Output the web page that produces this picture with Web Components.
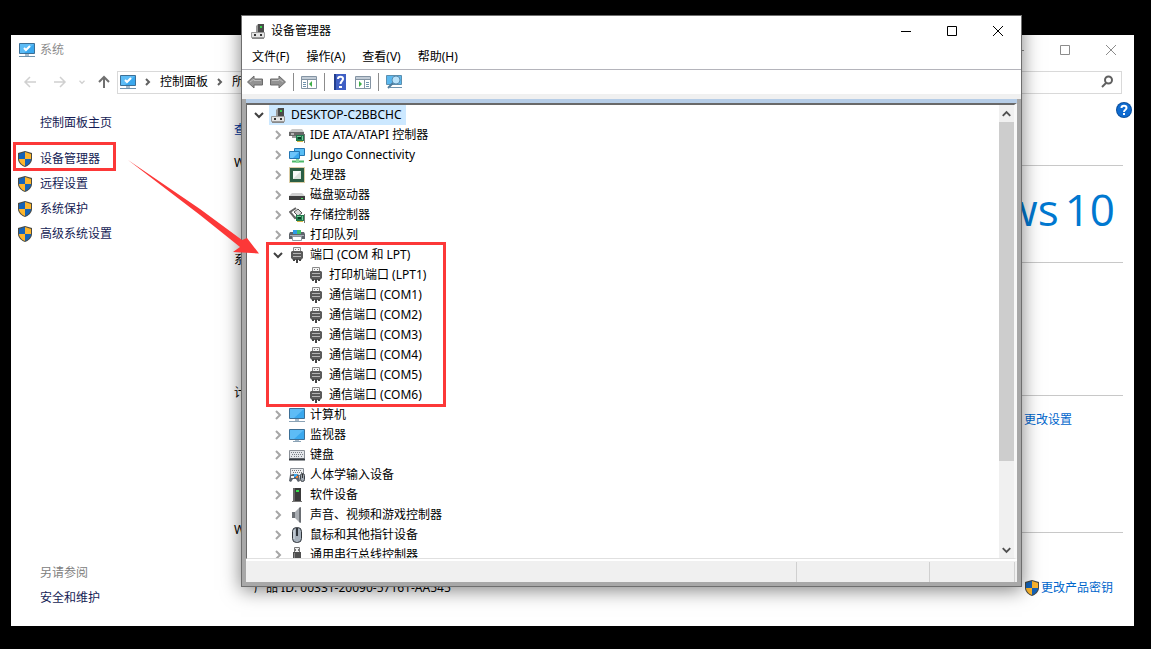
<!DOCTYPE html>
<html lang="zh-CN">
<head>
<meta charset="utf-8">
<title>设备管理器</title>
<style>
    html, body {
        height: 100%;
        margin: 0;
    }
    body {
        background: #000;
        font: 12px/20px "Noto Sans", "Noto Sans CJK SC", sans-serif;
        color: #000;
    }
</style>
</head>
<body>
<desktop-screen>
    <system-window slot="back"></system-window>
    <device-window slot="front">
        <tree-item level="0" icon="computer" open selected>DESKTOP-C2BBCHC</tree-item>
        <tree-item icon="ide">IDE ATA/ATAPI 控制器</tree-item>
        <tree-item icon="network">Jungo Connectivity</tree-item>
        <tree-item icon="cpu">处理器</tree-item>
        <tree-item icon="disk">磁盘驱动器</tree-item>
        <tree-item icon="storage">存储控制器</tree-item>
        <tree-item icon="printer">打印队列</tree-item>
        <tree-item icon="port" open>端口 (COM 和 LPT)</tree-item>
        <tree-item level="2" icon="port">打印机端口 (LPT1)</tree-item>
        <tree-item level="2" icon="port">通信端口 (COM1)</tree-item>
        <tree-item level="2" icon="port">通信端口 (COM2)</tree-item>
        <tree-item level="2" icon="port">通信端口 (COM3)</tree-item>
        <tree-item level="2" icon="port">通信端口 (COM4)</tree-item>
        <tree-item level="2" icon="port">通信端口 (COM5)</tree-item>
        <tree-item level="2" icon="port">通信端口 (COM6)</tree-item>
        <tree-item icon="pc">计算机</tree-item>
        <tree-item icon="monitor">监视器</tree-item>
        <tree-item icon="keyboard">键盘</tree-item>
        <tree-item icon="hid">人体学输入设备</tree-item>
        <tree-item icon="software">软件设备</tree-item>
        <tree-item icon="sound">声音、视频和游戏控制器</tree-item>
        <tree-item icon="mouse">鼠标和其他指针设备</tree-item>
        <tree-item icon="usb">通用串行总线控制器</tree-item>
    </device-window>
    <callout-marks slot="marks"></callout-marks>
</desktop-screen>

<script>
const card = `
    <path d="M7 8h8v6H7z" fill="#1f7a4b"/><path d="M9 10h3v2H9z" fill="#0b3b26"/>
    <path d="M13.500 9v4M8 9.500h4" stroke="#79c79a"/><path d="M8 14.500h6" stroke="#d9b64a"/><path d="M15.500 7v9" stroke="#777"/>`;
const screen = `
    <path d="M.5 1.500h15v10H.5z" fill="#3aa8ee" stroke="#3c6f96"/>
    <path d="M1 2h14L5 11H1z" fill="#6cc4fa" opacity=".7"/>`;

// all icons are drawn on a 16x16 grid
const icons = {
    computer: `
        <path d="M8 1h6v9H8z" fill="#4a4a4a"/><path d="M6 3l2-2v8H6z" fill="#9a9a9a"/><path d="M10 3h2v2h-2z" fill="#35d04a"/>
        <path d="M1.500 9.500h13v5h-13z" fill="#e4e4e4" stroke="#9a9a9a"/><path d="M4 11h2v2H4zM10 11h2v2h-2z" fill="#333"/>
        <path d="M2 15.500h12" stroke="#888"/>`,
    ide: `
        <path d="M3 2h10l2 3H0z" fill="#c8c8c8"/><path d="M0 5h15v4H0z" fill="#666"/><path d="M2 7h3" stroke="#fff"/>
        <path d="M3 9h5v2H3z" fill="#999"/>${card}`,
    network: `
        <path d="M5.500 1.500h10v7h-10z" fill="#58bdf5" stroke="#2476b3"/>
        <path d="M.5 4.500h10v7H.5z" fill="#3aa8ee" stroke="#2476b3"/><path d="M1 5h9l-6 6H1z" fill="#6cc4fa"/>
        <path d="M3 14.500h12" stroke="#4db86a" stroke-width="2"/><path d="M7 12h3v4H7z" fill="#86d89b"/>`,
    cpu: `
        <path d="M.5.500h15v15H.5z" fill="none" stroke="#b79a4b" stroke-dasharray="1 1"/>
        <path d="M1 1h14v14H1z" fill="#2b5e44"/><path d="M4 4h8v8H4z" fill="#dbe2de"/><path d="M4 4h8l-8 8z" fill="#f7f9f8"/>`,
    disk: `
        <path d="M3 6h10l3 3H0z" fill="#d0d0d0"/><path d="M0 9h16v4H0z" fill="#3e3e3e"/><path d="M12 11.500h2" stroke="#4be05e"/>`,
    storage: `
        <path d="M7 1L1 5l5 6 3-1" fill="none" stroke="#666" stroke-width="2"/><path d="M5 5l4-3 4 4-4 3z" fill="#d9d9d9" stroke="#555"/>
        ${card}`,
    printer: `
        <path d="M4 3h8v4H4z" fill="#2e9be6"/><path d="M8 3h4v4H8z" fill="#3fc06c"/>
        <path d="M1 5h3v2h8V5h3l1 2v5H0V7z" fill="#5f646b"/><path d="M1 8h14v1H1z" fill="#a9b0b8"/>
        <path d="M3.500 9.500h9v4h-9z" fill="#fff" stroke="#8f969e"/>`,
    port: `
        <path d="M4.500.5h7v4h-7z" fill="#f4f4f4" stroke="#8a8a8a"/><path d="M6 2h1v1H6zM9 2h1v1H9z" fill="#777"/>
        <path d="M3 4h10l1 1v6l-2 2H4l-2-2V5z" fill="#5a5a5a"/><path d="M4 6.500h8M4 9.500h8" stroke="#b5b5b5"/>
        <path d="M4 12h2v2H4zM7 12h2v4H7zM10 12h2v2h-2z" fill="#444"/>`,
    pc: `${screen}<path d="M6 12h4v2H6z" fill="#a9bccb"/><path d="M0 14.500h16" stroke="#8aa2b5"/>`,
    monitor: `<g transform="translate(0 1)">${screen}</g><path d="M6 13h4v1H6z" fill="#a9bccb"/><path d="M4 14.500h8" stroke="#8aa2b5"/>`,
    keyboard: `
        <path d="M.5 3.500h15v8H.5z" fill="#e3e6ea" stroke="#8b9097"/>
        <path d="M2 5.500h12M3 7.500h12M2 9.500h2M5 9.500h6M12 9.500h2" stroke="#777d85" stroke-dasharray="1 1"/>
        <path d="M0 12.500h16" stroke="#33383e" stroke-width="2"/>`,
    hid: `
        <path d="M1.500 1.500h13v7h-13z" fill="#eceef0" stroke="#8b9097"/><path d="M3 3.500h10M4 5.500h9" stroke="#777" stroke-dasharray="1 1"/>
        <path d="M0 14l1-6 3-1h4l2 1 1 6-2 1-2-3H4l-2 3z" fill="#5b626a"/><path d="M2 9h3v2H2z" fill="#f3f3f3"/>
        <path d="M5 7h3v3H5z" fill="#3aa8ee"/><path d="M7 9h2v2H7z" fill="#e87d37"/>
        <rect x="11.500" y="6.500" width="4" height="8" rx="2" fill="#9fa7b0" stroke="#3e444b"/><path d="M13.500 7v4" stroke="#333"/>`,
    software: `
        <path d="M4 1h8v13H4z" fill="#3a3a3a"/><path d="M4 1h2v13H4z" fill="#666"/><path d="M7 3h3v2H7z" fill="#35e04a"/><path d="M3 14.500h10" stroke="#777"/>`,
    sound: `
        <path d="M3 5h3v6H3z" fill="#6a6e73"/><path d="M6 5l5-5v16l-5-5z" fill="#a9adb2"/><path d="M10 1l2-1v16l-2-1z" fill="#6a6e73"/>`,
    mouse: `
        <rect x="3.500" y=".5" width="9" height="15" rx="4" fill="#a6b0bb" stroke="#30353b" stroke-width="1"/>
        <path d="M5 3v9" stroke="#dbe1e7"/><path d="M8 1v8" stroke="#30353b" stroke-width="2"/>`,
    usb: `
        <path d="M5.500.5h5v5h-5z" fill="#f0f0f0" stroke="#777"/><path d="M6 2h1v2H6zM9 2h1v2H9z" fill="#777"/>
        <path d="M4 5h8v9l-2 2H6l-2-2z" fill="#505050"/><path d="M5 6h1v8H5z" fill="#888"/>`,
    shield: `
        <path d="M8 0l7 2v6c0 4-4 7-7 8-3-1-7-4-7-8V2z" fill="#4a4a42"/>
        <path d="M8 1v7H2V3z" fill="#1463b8"/><path d="M8 1v7h6V3z" fill="#fdb52c"/>
        <path d="M8 8H2c0 3 3 6 6 7z" fill="#fdb52c"/><path d="M8 8h6c0 3-3 6-6 7z" fill="#1463b8"/>`,
    system: `${screen}<path d="M5 6l2 2 4-4" fill="none" stroke="#fff" stroke-width="2"/>
        <path d="M6 12h4v2H6z" fill="#a9bccb"/><path d="M0 14.500h16" stroke="#6f93ad"/>`,
    back: `<path d="M.5 8L7 2v3h8.500v6H7v3z" fill="#929292" stroke="#6b6b6b"/><path d="M3 8l4-3v1.500h7" fill="none" stroke="#bdbdbd"/>`,
    forward: `<path d="M15.500 8L9 2v3H.5v6H9v3z" fill="#929292" stroke="#6b6b6b"/><path d="M2 6.500h7V5l4 3" fill="none" stroke="#bdbdbd"/>`,
    pane: `
        <path d="M.5 2.500h15v12H.5z" fill="#fff" stroke="#8494a3"/><path d="M1 3h14v2H1z" fill="#c2ccd6"/><path d="M1 5.500h14M6.500 6v8" stroke="#8494a3"/>
        <path d="M2 8.500h3M2 10.500h3M2 12.500h3" stroke="#6f93ad"/><path d="M11 7v6L8 10z" fill="#3fae49"/>`,
    action: `
        <path d="M.5 2.500h15v12H.5z" fill="#fff" stroke="#8494a3"/><path d="M1 3h14v2H1z" fill="#c2ccd6"/><path d="M1 5.500h14M9.500 6v8" stroke="#8494a3"/>
        <path d="M11 8.500h3M11 10.500h3M11 12.500h3" stroke="#6f93ad"/><path d="M4 7v6l3-3z" fill="#3fae49"/>`,
    help: `
        <path d="M2 0h12v16H2z" fill="#3f5fc4"/><path d="M2 0h2v16H2z" fill="#24408f"/>
        <path d="M6 5c0-3 5-3 5 0 0 2-2.500 2-2.500 5" fill="none" stroke="#fff" stroke-width="2"/><path d="M7 12h3v2H7z" fill="#fff"/>`,
    scan: `
        <path d="M.5 1.500h15v9H.5z" fill="#5bb8ef" stroke="#5c8fae"/><path d="M4 13.500h12" stroke="#6f93ad"/>
        <circle cx="10" cy="6" r="4" fill="#b8e2fa" stroke="#5a8db0" stroke-width="1"/><path d="M7 9l-5 5" stroke="#4f7c9c" stroke-width="2"/>`,
    info: `
        <circle cx="8" cy="8" r="8" fill="#0a4f9e"/><circle cx="8" cy="8" r="7" fill="#0f6bd0"/>
        <path d="M5.500 6c0-3 5-3 5 0 0 2-2.500 1.500-2.500 4" fill="none" stroke="#fff" stroke-width="2"/><path d="M7 11h2v2H7z" fill="#fff"/>`,
    right: `<path d="M6 4l4 4-4 4" fill="none" stroke="currentColor" stroke-width="2"/>`,
    small: `<path d="M6 5l3 3-3 3" fill="none" stroke="currentColor" stroke-width="2"/>`,
    down: `<path d="M4 6l4 4 4-4" fill="none" stroke="currentColor" stroke-width="2"/>`,
    up: `<path d="M4 10l4-4 4 4" fill="none" stroke="currentColor" stroke-width="2"/>`,
    arrowLeft: `<path d="M14 8H3M8 3L3 8l5 5" fill="none" stroke="currentColor" stroke-width="1.500"/>`,
    arrowRight: `<path d="M2 8h11M8 3l5 5-5 5" fill="none" stroke="currentColor" stroke-width="1.500"/>`,
    arrowUp: `<path d="M8 14V3M3 8l5-5 5 5" fill="none" stroke="currentColor" stroke-width="2"/>`,
    search: `<circle cx="9.500" cy="6" r="3.500" fill="none" stroke="currentColor" stroke-width="2"/><path d="M7 9l-4 4" stroke="currentColor" stroke-width="2"/>`,
    minimize: `<path d="M3 8.500h10" stroke="currentColor"/>`,
    maximize: `<path d="M3.500 3.500h9v9h-9z" fill="none" stroke="currentColor"/>`,
    close: `<path d="M3 3l10 10M13 3L3 13" stroke="currentColor"/>`
};

// Base class: clones a template into an open shadow root
class BaseElement extends HTMLElement {
    constructor() {
        super();
        this.attachShadow({ mode: 'open' });
        const template = document.createElement('template');
        template.innerHTML = this.render();
        this.shadowRoot.appendChild(template.content.cloneNode(true));
    }
}

class WinIcon extends HTMLElement {
    constructor() {
        super();
        this.attachShadow({ mode: 'open' });
    }

    static get observedAttributes() {
        return ['name'];
    }

    attributeChangedCallback(name, oldValue, newValue) {
        this.shadowRoot.innerHTML = `
            <style>
                :host { display: block; flex: none; width: 16px; height: 16px; }
                svg { display: block; width: 100%; height: 100%; }
            </style>
            <svg viewBox="0 0 16 16" aria-hidden="true">${icons[newValue] || ''}</svg>
        `;
    }
}

class CaptionButtons extends BaseElement {
    render() {
        return `
            <style>
                :host { display: flex; margin-left: auto; }
                button {
                    width: 46px;
                    height: 28px;
                    padding: 0;
                    border: none;
                    background: none;
                    color: inherit;
                    display: flex;
                    align-items: center;
                    justify-content: center;
                }
                button:hover { background: #e5e5e5; }
            </style>
            <button aria-label="最小化"><win-icon name="minimize"></win-icon></button>
            <button aria-label="最大化"><win-icon name="maximize"></win-icon></button>
            <button aria-label="关闭"><win-icon name="close"></win-icon></button>
        `;
    }
}

class TreeItem extends BaseElement {
    render() {
        return `
            <style>
                :host {
                    display: flex;
                    height: 20px;
                    padding-left: 19px;
                    white-space: nowrap;
                }
                :host([level="0"]) { padding-left: 0; }
                :host([level="2"]) { padding-left: 38px; }
                button {
                    width: 20px;
                    padding: 0 2px;
                    border: none;
                    background: none;
                    color: #a6a6a6;
                }
                :host([open]) button { color: #404040; }
                :host([level="2"]) button { visibility: hidden; }
                .label {
                    display: flex;
                    align-items: center;
                    gap: 5px;
                    padding: 0 4px 0 1px;
                }
                :host([selected]) .label { background: #cce8ff; }
            </style>
            <button aria-label="展开"><win-icon class="chevron"></win-icon></button>
            <span class="label"><win-icon class="icon"></win-icon><slot></slot></span>
        `;
    }

    connectedCallback() {
        this.setAttribute('role', 'treeitem');
        this.shadowRoot.querySelector('.chevron').setAttribute('name', this.hasAttribute('open') ? 'down' : 'right');
        this.shadowRoot.querySelector('.icon').setAttribute('name', this.getAttribute('icon'));
    }
}

class DeviceWindow extends BaseElement {
    render() {
        return `
            <style>
                :host {
                    display: flex;
                    flex-direction: column;
                    box-sizing: border-box;
                    border: 1px solid #6e6e6e;
                    background: #fff;
                    box-shadow: 0 3px 18px rgba(0,0,0,0.5);
                }
                header, nav, .toolbar { display: flex; align-items: center; }
                header { height: 29px; gap: 5px; padding-left: 8px; }
                nav { height: 24px; gap: 1px; padding: 0 2px; }
                nav button {
                    padding: 0 8px;
                    border: none;
                    background: none;
                    font: inherit;
                    color: inherit;
                }
                .toolbar {
                    height: 24px;
                    padding-left: 5px;
                    gap: 7px;
                    border-top: 1px solid #b4b4bb;
                    border-bottom: 5px solid #f0f0f0;
                }
                .toolbar button { padding: 0; border: none; background: none; }
                .toolbar hr { width: 1px; height: 18px; margin: 0; border: none; background: #8c8c8c; }
                .frame {
                    flex: 1;
                    min-height: 0;
                    display: flex;
                    flex-direction: column;
                    border: 4px solid #a8a8a8;
                    border-top: none;
                    background: #f0f0f0;
                }
                .strip { height: 4px; background: #b6cde7; }
                .view {
                    flex: 1;
                    min-height: 0;
                    display: flex;
                    border: 1px solid #696969;
                    border-width: 2px 0 0 1px;
                    border-right: 3px solid #f8f8f8;
                    border-bottom: 1px solid #e0e0e0;
                    background: #fff;
                }
                .tree { flex: 1; min-width: 0; overflow: hidden; padding-left: 2px; }
                .scrollbar {
                    width: 15px;
                    display: flex;
                    flex-direction: column;
                    background: #f0f0f0;
                    color: #505050;
                }
                .scrollbar button {
                    height: 17px;
                    padding: 0;
                    border: none;
                    background: none;
                    color: inherit;
                }
                .scrollbar win-icon { width: 15px; }
                .track { flex: 1; }
                .thumb { height: 81%; background: #cdcdcd; }
                footer {
                    display: flex;
                    height: 20px;
                    padding: 1px 2px 0 0;
                    border-top: 2px solid #fff;
                }
                footer span { border-right: 1px solid #d0d0d0; width: 132px; }
                footer span:first-child { flex: 1; }
                footer span:last-child { width: 84px; }
            </style>
            <header>
                <win-icon name="computer"></win-icon>
                <span>设备管理器</span>
                <caption-buttons></caption-buttons>
            </header>
            <nav>
                <button>文件(F)</button>
                <button>操作(A)</button>
                <button>查看(V)</button>
                <button>帮助(H)</button>
            </nav>
            <div class="toolbar">
                <button aria-label="后退"><win-icon name="back"></win-icon></button>
                <button aria-label="前进"><win-icon name="forward"></win-icon></button>
                <hr>
                <button aria-label="显示控制台树"><win-icon name="pane"></win-icon></button>
                <hr>
                <button aria-label="帮助"><win-icon name="help"></win-icon></button>
                <button aria-label="操作窗格"><win-icon name="action"></win-icon></button>
                <hr>
                <button aria-label="扫描检测硬件改动"><win-icon name="scan"></win-icon></button>
            </div>
            <div class="frame">
                <div class="strip"></div>
                <div class="view">
                    <div class="tree" role="tree"><slot></slot></div>
                    <div class="scrollbar">
                        <button aria-label="向上滚动"><win-icon name="up"></win-icon></button>
                        <div class="track"><div class="thumb"></div></div>
                        <button aria-label="向下滚动"><win-icon name="down"></win-icon></button>
                    </div>
                </div>
                <footer><span></span><span></span><span></span></footer>
            </div>
        `;
    }
}

class SystemWindow extends BaseElement {
    render() {
        return `
            <style>
                :host {
                    display: flex;
                    flex-direction: column;
                    background: #fff;
                }
                header { display: flex; align-items: center; height: 29px; gap: 5px; padding-left: 8px; color: #8c8c8c; }
                .nav, .history { display: flex; align-items: center; color: #d0d0d0; }
                .nav {
                    gap: 9px;
                    height: 24px;
                    margin-top: 6px;
                    padding: 0 12px 0 11px;
                }
                .history { gap: 14px; }
                .nav button { padding: 0; border: none; background: none; color: inherit; }
                .nav .recent win-icon { width: 10px; height: 10px; }
                .nav .up { color: #707070; }
                .address {
                    flex: 1;
                    display: flex;
                    align-items: center;
                    gap: 4px;
                    box-sizing: border-box;
                    height: 23px;
                    margin-left: -4px;
                    padding: 0 6px 0 2px;
                    border: 1px solid #d9d9d9;
                    color: #606060;
                }
                .address a { color: #000; text-decoration: none; }
                .address .search { margin-left: auto; }
                .body { flex: 1; display: flex; }
                aside {
                    width: 217px;
                    display: flex;
                    flex-direction: column;
                    gap: 5px;
                    padding: 19px 0 18px 6px;
                }
                aside a {
                    display: flex;
                    align-items: center;
                    gap: 7px;
                    color: #151c55;
                    text-decoration: none;
                }
                aside .plain { padding-left: 23px; }
                aside .home { margin-bottom: 11px; }
                aside .also { margin-top: auto; color: #808080; }
                main { flex: 1; padding-top: 26px; padding-right: 11px; }
                h1, h2 { margin: 0; font: inherit; white-space: nowrap; }
                h1 { color: #003399; height: 33px; }
                h2 { display: flex; align-items: center; gap: 6px; }
                h2::after { content: ""; flex: 1; height: 1px; margin-top: 4px; background: #c8c8c8; }
                section { display: flex; flex-direction: column; }
                .edition { height: 97px; }
                .specs { height: 133px; }
                .name { height: 137px; }
                .logo {
                    display: flex;
                    gap: 6px;
                    margin: 8px 8px 0 auto;
                    font: 44px/56px "Open Sans", "Noto Sans", sans-serif;
                    color: #0078d0;
                }
                .link {
                    display: flex;
                    align-items: center;
                    gap: 1px;
                    margin-left: auto;
                    color: #0066cc;
                    text-decoration: none;
                }
                .name .link { margin: 7px 51px 0 auto; }
                .row { display: flex; align-items: center; margin: 38px 10px 0 20px; }
                .help { display: flex; justify-content: flex-end; margin: -18px -9px 2px 0; }
            </style>
            <header>
                <win-icon name="system"></win-icon>
                <span>系统</span>
                <caption-buttons></caption-buttons>
            </header>
            <div class="nav">
                <div class="history">
                    <button aria-label="返回"><win-icon name="arrowLeft"></win-icon></button>
                    <button aria-label="前进"><win-icon name="arrowRight"></win-icon></button>
                </div>
                <button class="recent" aria-label="最近的位置"><win-icon name="down"></win-icon></button>
                <button class="up" aria-label="上移"><win-icon name="arrowUp"></win-icon></button>
                <div class="address">
                    <win-icon name="system"></win-icon>
                    <win-icon name="small"></win-icon>
                    <a href="#">控制面板</a>
                    <win-icon name="small"></win-icon>
                    <a href="#">所有</a>
                    <button class="search" aria-label="搜索"><win-icon name="search"></win-icon></button>
                </div>
            </div>
            <div class="body">
                <aside>
                    <a class="plain home" href="#">控制面板主页</a>
                    <a href="#"><win-icon name="shield"></win-icon>设备管理器</a>
                    <a href="#"><win-icon name="shield"></win-icon>远程设置</a>
                    <a href="#"><win-icon name="shield"></win-icon>系统保护</a>
                    <a href="#"><win-icon name="shield"></win-icon>高级系统设置</a>
                    <span class="plain also">另请参阅</span>
                    <a class="plain" href="#">安全和维护</a>
                </aside>
                <main>
                    <div class="help"><win-icon name="info"></win-icon></div>
                    <h1>查看</h1>
                    <section class="edition">
                        <h2>Windows</h2>
                        <div class="logo"><span>Windows</span><span>10</span></div>
                    </section>
                    <section class="specs"><h2>系统</h2></section>
                    <section class="name">
                        <h2>计算机</h2>
                        <a class="link" href="#"><win-icon name="shield"></win-icon>更改设置</a>
                    </section>
                    <section>
                        <h2>Windows</h2>
                        <div class="row">
                            <span>产品 ID: 00331-20090-57161-AA545</span>
                            <a class="link" href="#"><win-icon name="shield"></win-icon>更改产品密钥</a>
                        </div>
                    </section>
                </main>
            </div>
        `;
    }
}

// Red boxes and the arrow that joins them
class CalloutMarks extends BaseElement {
    render() {
        return `
            <style>
                :host { display: block; pointer-events: none; }
                svg { display: block; width: 100%; height: 100%; }
            </style>
            <svg aria-hidden="true">
                <g fill="none" stroke="#fc3838" stroke-width="3">
                    <rect x="14.500" y="143.500" width="100" height="26"/>
                    <rect x="267.500" y="243.500" width="177" height="162"/>
                </g>
                <path d="M128 160L200 209 242 240 247 238 259 253.500 233 252 240 247 200 215z" fill="#fc3838"/>
            </svg>
        `;
    }
}

class DesktopScreen extends BaseElement {
    render() {
        return `
            <style>
                :host {
                    display: block;
                    position: relative;
                    height: 100%;
                    overflow: hidden;
                    background: #000;
                }
                ::slotted(*) { position: absolute; }
                ::slotted(system-window) { inset: 35px 17px 23px 11px; }
                ::slotted(device-window) { inset: 15px 129px 62px 241px; }
                ::slotted(callout-marks) { inset: 0; }
            </style>
            <slot name="back"></slot>
            <slot name="front"></slot>
            <slot name="marks"></slot>
        `;
    }
}

customElements.define('win-icon', WinIcon);
customElements.define('caption-buttons', CaptionButtons);
customElements.define('tree-item', TreeItem);
customElements.define('device-window', DeviceWindow);
customElements.define('system-window', SystemWindow);
customElements.define('callout-marks', CalloutMarks);
customElements.define('desktop-screen', DesktopScreen);
</script>
</body>
</html>
